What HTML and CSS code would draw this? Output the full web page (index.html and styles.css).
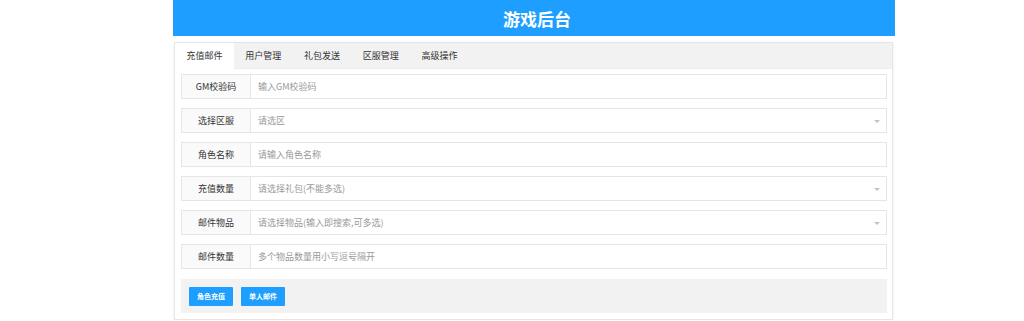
FILE: index.html
```html
<!DOCTYPE html>
<html lang="zh-CN">
<head>
<meta charset="utf-8">
<title>游戏后台</title>
<link rel="stylesheet" href="styles.css">
</head>
<body>
<div class="wrap">
  <div class="header">游戏后台</div>
  <div class="card">
    <ul class="tabs">
      <li class="tab active">充值邮件</li>
      <li class="tab">用户管理</li>
      <li class="tab">礼包发送</li>
      <li class="tab">区服管理</li>
      <li class="tab">高级操作</li>
    </ul>
    <div class="content">
      <div class="row"><label class="lbl">GM校验码</label><div class="field"><span class="ph">输入GM校验码</span></div></div>
      <div class="row"><label class="lbl">选择区服</label><div class="field select"><span class="ph">请选区</span><i class="arrow"></i></div></div>
      <div class="row"><label class="lbl">角色名称</label><div class="field"><span class="ph">请输入角色名称</span></div></div>
      <div class="row"><label class="lbl">充值数量</label><div class="field select"><span class="ph">请选择礼包(不能多选)</span><i class="arrow"></i></div></div>
      <div class="row"><label class="lbl">邮件物品</label><div class="field select"><span class="ph">请选择物品(输入即搜索,可多选)</span><i class="arrow"></i></div></div>
      <div class="row"><label class="lbl">邮件数量</label><div class="field"><span class="ph">多个物品数量用小写逗号隔开</span></div></div>
      <div class="actions">
        <button class="btn">角色充值</button>
        <button class="btn">单人邮件</button>
      </div>
    </div>
  </div>
</div>
</body>
</html>
```
FILE: styles.css
```css
* { box-sizing: border-box; }
html, body { margin: 0; padding: 0; background: #fff; }
body {
  font-family: "Noto Sans CJK SC", "Noto Sans", sans-serif;
  color: #333;
}
.wrap {
  width: 722px;
  margin-left: 173px;
}
.header {
  height: 36px;
  background: #1E9FFF;
  color: #fff;
  font-size: 17px;
  font-weight: bold;
  display: flex;
  align-items: center;
  justify-content: center;
  padding-left: 6px;
}
.card {
  margin: 6px 2px 0 1px;
  border: 1px solid #e6e6e6;
  box-shadow: 0 1px 3px rgba(0,0,0,0.08);
  background: #fff;
}
.tabs {
  list-style: none;
  margin: 0;
  padding: 0;
  display: flex;
  height: 26px;
  background: #f2f2f2;
  border-bottom: 1px solid #eee;
}
.tab {
  padding: 0 11.4px;
  font-size: 9px;
  line-height: 26px;
  color: #333;
}
.tab.active {
  background: #fff;
  height: 26px;
}
.content {
  padding: 5px 5px 6px 6px;
}
.row {
  display: flex;
  height: 25px;
  margin-bottom: 9px;
}
.lbl {
  width: 69px;
  flex: none;
  background: #fafafa;
  border: 1px solid #e6e6e6;
  border-right: none;
  font-size: 9px;
  display: flex;
  align-items: center;
  justify-content: center;
  color: #333;
}
.field {
  flex: 1;
  border: 1px solid #e6e6e6;
  display: flex;
  align-items: center;
  padding-left: 7px;
  position: relative;
}
.ph {
  font-size: 9px;
  color: #999;
}
.arrow {
  position: absolute;
  right: 6px;
  top: 50%;
  margin-top: -1px;
  width: 0;
  height: 0;
  border-left: 3px solid transparent;
  border-right: 3px solid transparent;
  border-top: 3px solid #c2c2c2;
}
.actions {
  margin-top: 10px;
  background: #f2f2f2;
  height: 34px;
  display: flex;
  align-items: center;
  gap: 8px;
  padding-left: 8px;
}
.btn {
  height: 19px;
  width: 44px;
  padding: 0;
  border: none;
  border-radius: 1px;
  background: #1E9FFF;
  color: #fff;
  font-family: "Noto Sans CJK SC", sans-serif;
  font-size: 7px;
  font-weight: bold;
  line-height: 19px;
  text-align: center;
}
```
